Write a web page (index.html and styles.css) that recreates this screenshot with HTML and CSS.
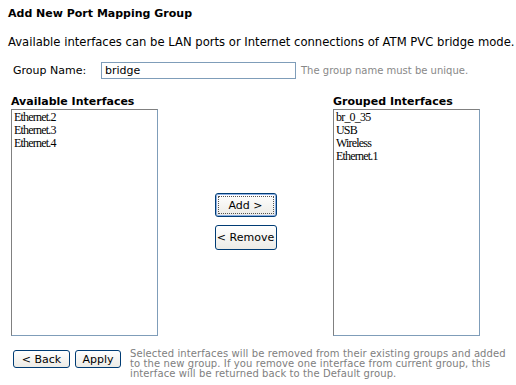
FILE: index.html
```html
<!DOCTYPE html>
<html>
<head>
<meta charset="utf-8">
<link rel="stylesheet" href="styles.css">
</head>
<body>
<div class="page">
  <div class="title">Add New Port Mapping Group</div>
  <div class="desc">Available interfaces can be LAN ports or Internet connections of ATM PVC bridge mode.</div>
  <div class="name-row">
    <span class="name-label">Group Name:</span>
    <input class="name-input" type="text" value="bridge">
    <span class="hint">The group name must be unique.</span>
  </div>
  <div class="lists">
    <div class="col">
      <div class="col-title">Available Interfaces</div>
      <div class="listbox">
        <div class="opt">Ethernet.2</div>
        <div class="opt">Ethernet.3</div>
        <div class="opt">Ethernet.4</div>
      </div>
    </div>
    <div class="mid">
      <button class="btn btn-add">Add &gt;</button>
      <button class="btn">&lt; Remove</button>
    </div>
    <div class="col">
      <div class="col-title">Grouped Interfaces</div>
      <div class="listbox">
        <div class="opt">br_0_35</div>
        <div class="opt">USB</div>
        <div class="opt">Wireless</div>
        <div class="opt">Ethernet.1</div>
      </div>
    </div>
  </div>
  <div class="bottom">
    <button class="btn btn-back">&lt; Back</button>
    <button class="btn btn-apply">Apply</button>
    <div class="note">Selected interfaces will be removed from their existing groups and added to the new group. If you remove one interface from current group, this interface will be returned back to the Default group.</div>
  </div>
</div>
</body>
</html>
```
FILE: styles.css
```css
html, body { margin: 0; padding: 0; background: #fff; }
body { font-family: "DejaVu Sans", Verdana, sans-serif; font-size: 11px; color: #000; }
.page { padding: 7px 0 0 8px; width: 508px; }
.title { font-weight: bold; font-size: 11px; height: 14px; line-height: 14px; }
.desc { margin-top: 14px; line-height: 14px; white-space: nowrap; font-size: 11.6px; }
.name-row { display: flex; align-items: center; margin-top: 13px; height: 17px; }
.name-label { padding-left: 5px; width: 88px; }
.name-input { box-sizing: border-box; width: 195px; height: 17px; border: 1px solid #7f9db9; padding: 0 3px; font: 11px "DejaVu Sans", sans-serif; margin: 0; }
.hint { color: #888; font-size: 10px; margin-left: 5px; }
.lists { display: flex; margin-top: 17px; padding-left: 3px; }
.col { display: flex; flex-direction: column; }
.col-title { font-weight: bold; font-size: 11px; line-height: 12px; height: 12px; }
.listbox { box-sizing: border-box; width: 147px; height: 227px; margin-top: 1px; border: 1px solid #7f9db9; border-top-color: #808080; border-left-color: #808080; padding: 1px 0 0 2px; font-family: "Liberation Serif", serif; font-size: 12px; letter-spacing: -0.8px; }
.opt { line-height: 13px; height: 13px; }
.mid { width: 175px; display: flex; flex-direction: column; align-items: center; padding-top: 97px; gap: 8px; }
.btn { box-sizing: border-box; height: 18px; padding: 0 7px; font: 11px "DejaVu Sans", sans-serif; color: #000; background: linear-gradient(#fff, #ecebe6); border: 1px solid #003c74; border-radius: 3px; margin: 0; }
.mid .btn { width: 62px; height: 24px; padding: 0; }
.mid .btn + .btn { height: 25px; }
.btn-add { box-shadow: inset 0 0 0 1px #8eb1e6; outline: 1px dotted #555; outline-offset: -4px; }
.btn-back { width: 57px; }
.btn-apply { width: 46px; padding: 0; }
.bottom { display: flex; align-items: flex-start; margin-top: 14px; padding-left: 5px; gap: 5px; }
.note { color: #808080; font-size: 10px; line-height: 10px; margin-left: 4px; width: 386px; margin-top: -1px; letter-spacing: 0.1px; }
```
